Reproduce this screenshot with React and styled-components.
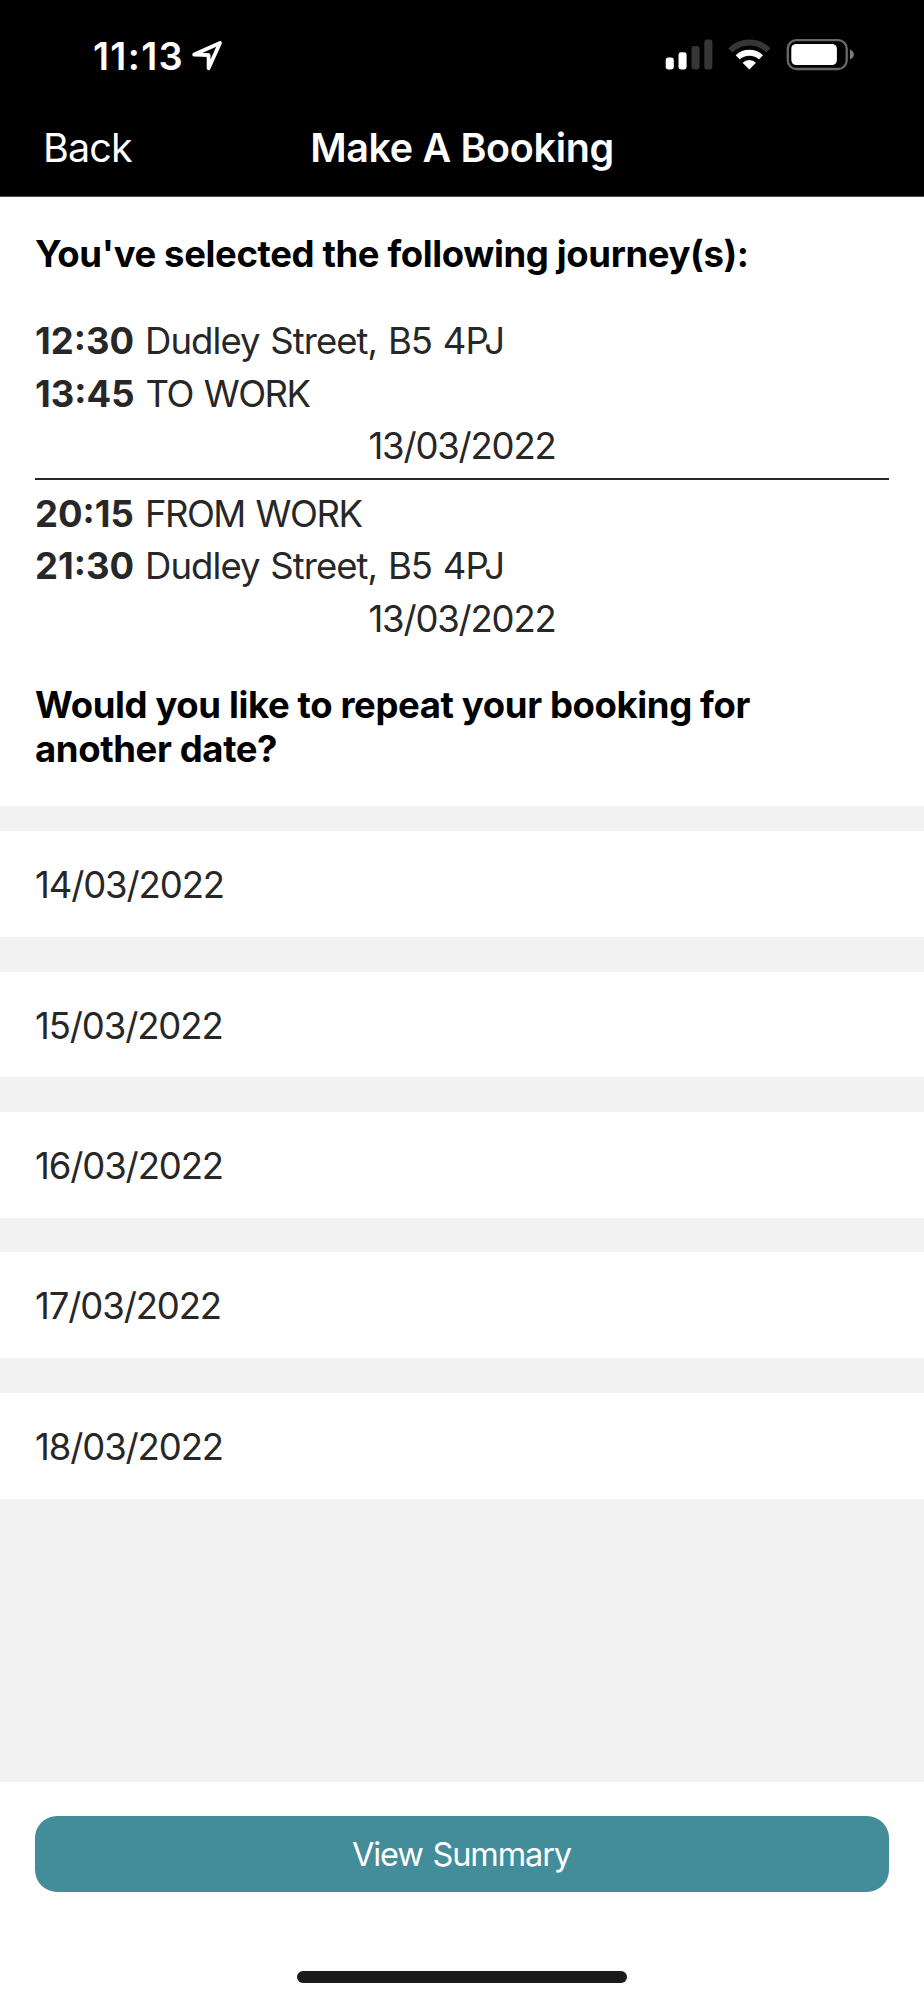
import React, { Component } from 'react';
import styled, { createGlobalStyle } from 'styled-components';

const GlobalStyle = createGlobalStyle`
  body {
    margin: 0;
    background: #ffffff;
    font-family: Inter, 'Liberation Sans', sans-serif;
  }
`;
const Screen = styled.div`
  width: 924px;
  height: 2000px;
  display: flex;
  flex-direction: column;
  overflow: hidden;
  background: #f2f2f2;
`;
const Header = styled.header`
  height: 197px;
  box-sizing: border-box;
  background: #000000;
  color: #ffffff;
  border-bottom: 1px solid #4c4647;
`;
const StatusBar = styled.div`
  height: 99px;
  box-sizing: border-box;
  padding: 12px 69px 0 93px;
  display: flex;
  align-items: center;
`;
const Clock = styled.span`
  font-size: 38px;
  font-weight: 600;
  letter-spacing: 1.3px;
  margin-right: 6px;
`;
const StatusIcons = styled.svg`
  margin-left: auto;
`;
const NavBar = styled.nav`
  height: 98px;
  padding: 0 43px;
  display: grid;
  grid-template-columns: 1fr auto 1fr;
  align-items: center;
  font-size: 39.5px;
  line-height: 98px;
`;
const BackLink = styled.span`
  letter-spacing: -0.9px;
`;
const Title = styled.span`
  font-weight: 600;
  letter-spacing: -0.35px;
`;
const Summary = styled.section`
  height: 608.6px;
  box-sizing: border-box;
  padding: 35.6px 35px 0;
  background: #ffffff;
  flex: none;
`;
const Heading = styled.h2`
  margin: 0;
  width: 760px;
  font-size: 36.5px;
  font-weight: 700;
  line-height: 43.2px;
  letter-spacing: -0.38px;
  color: #000000;
`;
const Journeys = styled.div`
  margin: 39.5px 0 39px;
`;
const Journey = styled.div`
  color: #272727;
  font-size: 36.5px;
  line-height: 52.5px;

  & + & {
    margin-top: 5px;
    padding-top: 8px;
    border-top: 2px solid #272727;
  }
`;
const Stop = styled.div`
  display: flex;
`;
const Time = styled.strong`
  font-weight: 700;
  letter-spacing: 0;
  margin-right: 11px;
`;
const Place = styled.span`
  letter-spacing: ${props => props.$caps ? '-1.5px' : '-0.95px'};
  word-spacing: ${props => props.$caps ? '2px' : '1.4px'};
`;
const JourneyDate = styled.div`
  text-align: center;
  letter-spacing: -1.2px;
`;
const DateList = styled.div`
  flex: 1;
  padding-top: 25.7px;
  display: flex;
  flex-direction: column;
  gap: 34.6px;
`;
const DateRow = styled.div`
  height: 105.8px;
  box-sizing: border-box;
  flex: none;
  padding: 2px 0 0 35px;
  background: #ffffff;
  color: #272727;
  font-size: 36.5px;
  line-height: 105.8px;
  letter-spacing: -1.12px;
`;
const Footer = styled.footer`
  height: 218px;
  box-sizing: border-box;
  padding: 34px 35px 17px;
  background: #ffffff;
  display: flex;
  flex-direction: column;
  align-items: center;
  justify-content: space-between;
`;
const SummaryBtn = styled.button`
  width: 100%;
  height: 76px;
  padding: 1px 1px 0 0;
  border: none;
  border-radius: 22px;
  background: #438d9b;
  color: #ffffff;
  font-family: inherit;
  font-size: 32.5px;
  letter-spacing: -1.1px;
  word-spacing: 1.5px;
`;
const HomeBar = styled.div`
  width: 330px;
  height: 12px;
  border-radius: 6px;
  background: #1b1b1b;
`;

const journeys = [
  {
    date: '13/03/2022',
    stops: [
      { time: '12:30', place: 'Dudley Street, B5 4PJ' },
      { time: '13:45', place: 'TO WORK', caps: true }
    ]
  },
  {
    date: '13/03/2022',
    stops: [
      { time: '20:15', place: 'FROM WORK', caps: true },
      { time: '21:30', place: 'Dudley Street, B5 4PJ' }
    ]
  }
];

const dates = ['14/03/2022', '15/03/2022', '16/03/2022', '17/03/2022', '18/03/2022'];

const renderLocation = () => {
  return (
    <svg width="34" height="32" viewBox="190 40 34 32">
      <path
        d="M194.2 54.5 L220 43 L208.6 68.3 V55.2 Z"
        fill="none"
        stroke="#fff"
        strokeWidth="3.8"
        strokeLinejoin="round" />
    </svg>
  );
};

const renderStatusIcons = () => {
  return (
    <StatusIcons width="190" height="35" viewBox="665 38 190 35">
      <g fill="#fff">
        <rect x="665.7" y="57.6" width="8.1" height="11.8" rx="2.4" />
        <rect x="678.5" y="52.3" width="8.1" height="17.1" rx="2.4" />
      </g>
      <g fill="#363636">
        <rect x="691.5" y="46" width="8.1" height="23.4" rx="2.4" />
        <rect x="704.3" y="39.6" width="8.1" height="29.8" rx="2.4" />
      </g>
      <path d="M730.3 50.4 A27 27 0 0 1 768.4 50.4" fill="none" stroke="#363636" strokeWidth="6" />
      <path d="M737.7 57.4 A17.2 17.2 0 0 1 761 57.4" fill="none" stroke="#fff" strokeWidth="6" />
      <path d="M749.3 69.6 L742.6 62.8 A9.6 9.6 0 0 1 756 62.8 Z" fill="#fff" />
      <rect x="787.8" y="40.1" width="58.9" height="28.9" rx="8.6" fill="none" stroke="#686868" strokeWidth="2.3" />
      <rect x="791.3" y="43.9" width="45.6" height="21.2" rx="5" fill="#fff" />
      <path d="M850 49.5 C855.2 51.5 855.2 57.5 850 59.5 Z" fill="#7a7a7a" />
    </StatusIcons>
  );
};

class App extends Component {
  renderStop(stop) {
    return (
      <Stop key={stop.time}>
        <Time>{stop.time}</Time>
        <Place $caps={stop.caps}>{stop.place}</Place>
      </Stop>
    );
  }
  render() {
    return (
      <Screen>
        <GlobalStyle />
        <Header>
          <StatusBar>
            <Clock>11:13</Clock>
            {renderLocation()}
            {renderStatusIcons()}
          </StatusBar>
          <NavBar>
            <BackLink>Back</BackLink>
            <Title>Make A Booking</Title>
          </NavBar>
        </Header>
        <Summary>
          <Heading>You've selected the following journey(s):</Heading>
          <Journeys>
            {journeys.map((journey, i) => (
              <Journey key={i}>
                {journey.stops.map(this.renderStop)}
                <JourneyDate>{journey.date}</JourneyDate>
              </Journey>
            ))}
          </Journeys>
          <Heading>Would you like to repeat your booking for another date?</Heading>
        </Summary>
        <DateList>
          {dates.map(date => <DateRow key={date}>{date}</DateRow>)}
        </DateList>
        <Footer>
          <SummaryBtn>View Summary</SummaryBtn>
          <HomeBar />
        </Footer>
      </Screen>
    );
  }
}

export default App;
